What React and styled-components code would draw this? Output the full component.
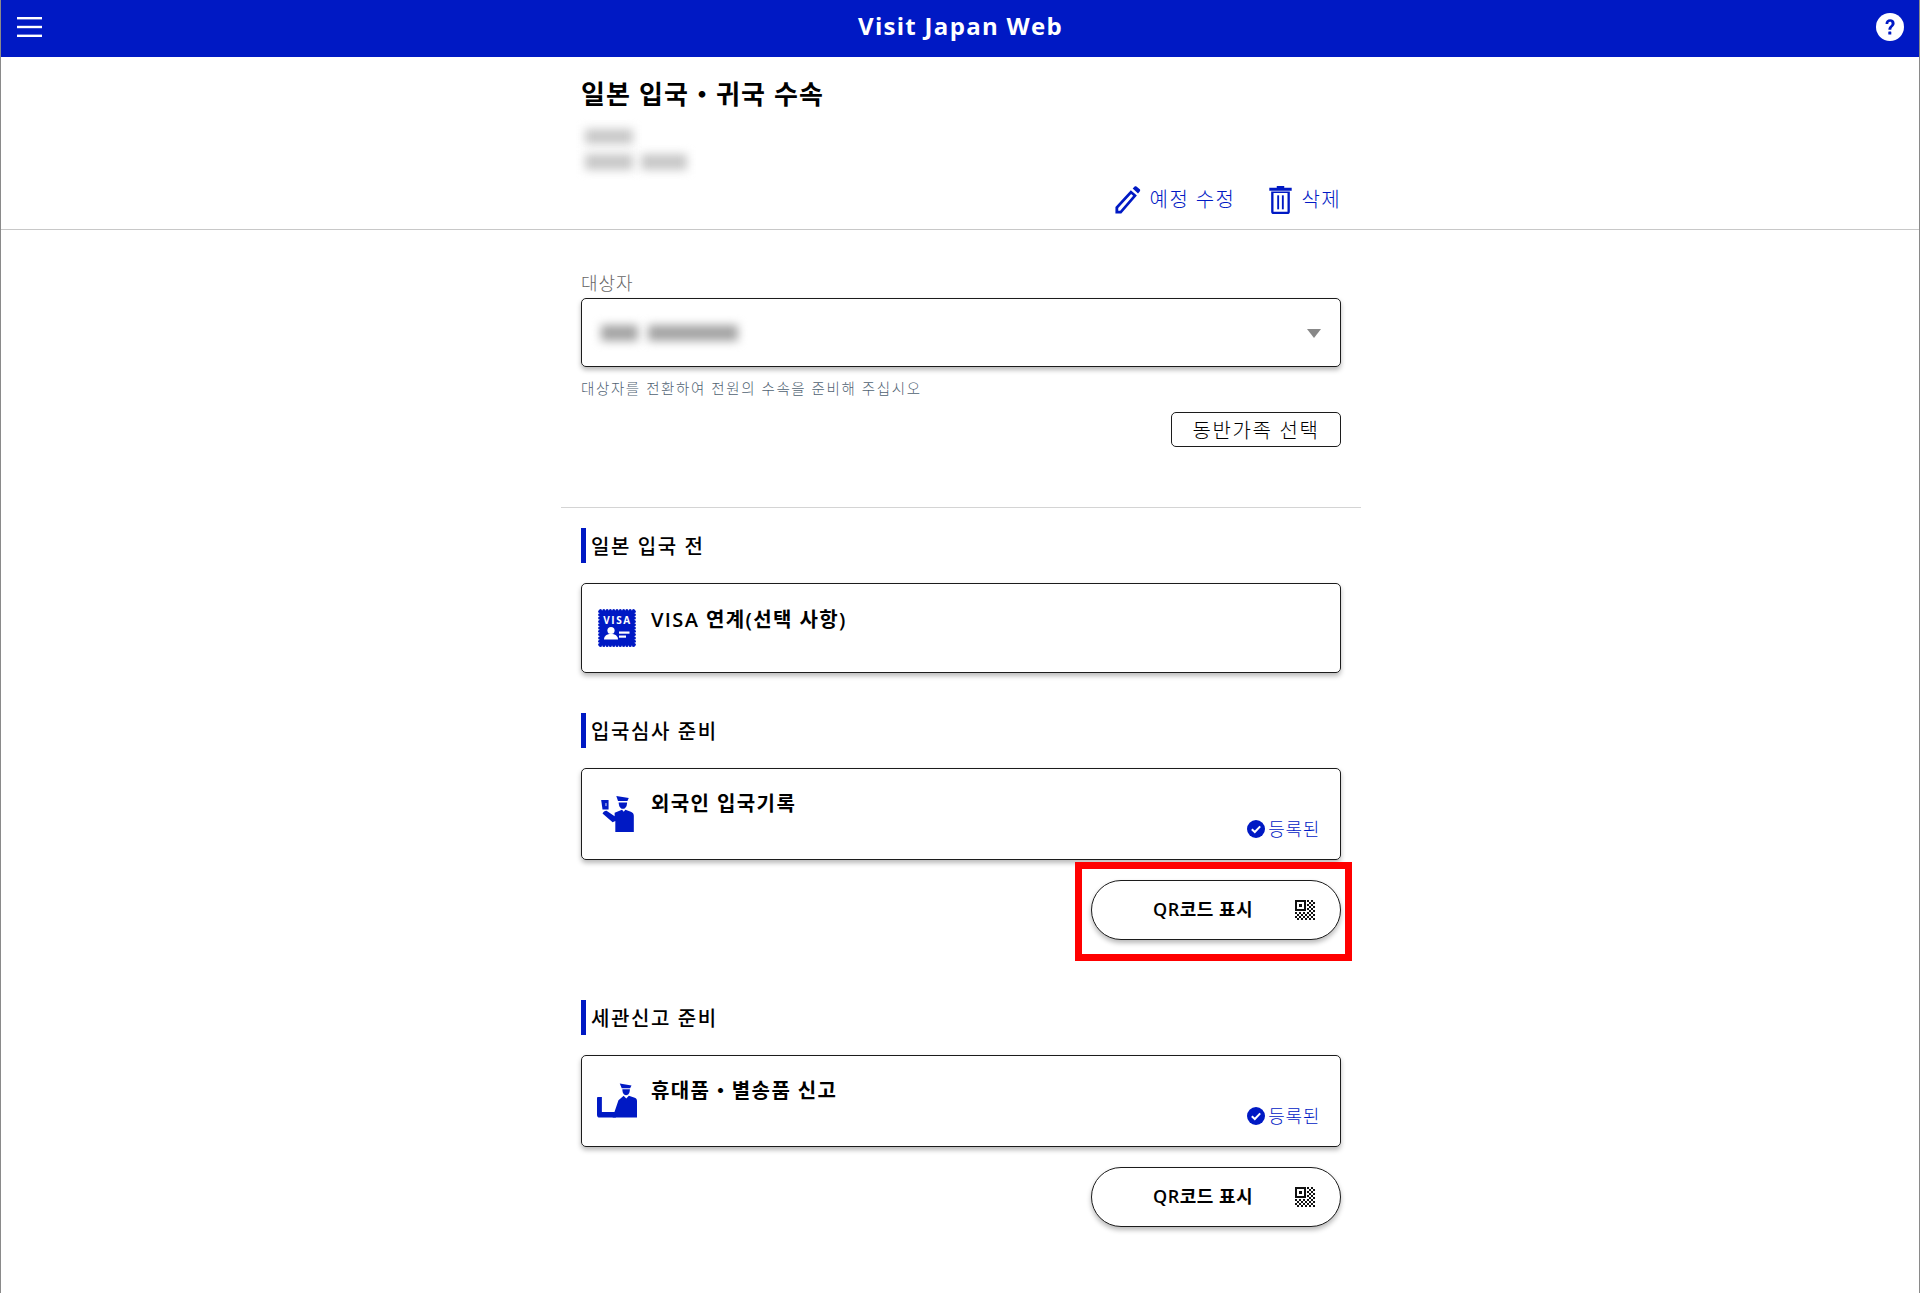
import React from 'react';
import styled, { createGlobalStyle } from 'styled-components';

const BLUE = '#0019c4';
const FONT = '"Open Sans", "Noto Sans CJK KR", sans-serif';

const GlobalStyle = createGlobalStyle`
  html, body { margin: 0; padding: 0; background: #fff; }
  body { font-family: ${FONT}; color: #000; }
  * { box-sizing: border-box; }
`;

const Page = styled.div`
  min-height: 1293px;
  border-left: 1px solid #8a8a8a;
  border-right: 1px solid #8a8a8a;
`;

const Header = styled.header`
  height: 57px;
  background: ${BLUE};
  display: flex;
  align-items: center;
  justify-content: space-between;
  padding: 0 15px 3px 16px;
`;

const BrandTitle = styled.div`
  color: #fff;
  font-size: 24px;
  font-weight: 700;
  letter-spacing: 1.3px;
  line-height: 50px;
  margin: 0 -3px 2px 0;
`;

const TopSection = styled.div`
  height: 173px;
  border-bottom: 1px solid #c8c8c8;
`;

const Column = styled.div`
  width: 760px;
  margin-left: 580px;
`;

const TripTitle = styled.h1`
  margin: 0;
  padding-top: 19px;
  font-size: 26px;
  font-weight: 700;
  line-height: 36px;
  letter-spacing: 1.1px;
`;

const BlurRow = styled.div`
  display: flex;
  gap: ${p => p.$gap || 14}px;
  margin-top: ${p => p.$top || 0}px;
  padding-left: ${p => p.$left || 0}px;
`;

const BlurBlock = styled.div`
  height: ${p => p.$h || 15}px;
  width: ${p => p.$w}px;
  background: ${p => p.$color || '#c8c8c8'};
  filter: blur(5px);
`;

const TripActions = styled.div`
  display: flex;
  justify-content: flex-end;
  align-items: center;
  gap: 33px;
  margin-top: 15px;
`;

const TripAction = styled.a`
  display: flex;
  align-items: center;
  gap: ${p => p.$gap}px;
  color: ${BLUE};
  font-size: 20px;
  font-weight: 300;
  line-height: 30px;
  letter-spacing: 1.4px;
`;

const TargetBlock = styled.div`
  padding-top: 38px;
`;

const FieldLabel = styled.div`
  font-size: 18px;
  font-weight: 300;
  line-height: 30px;
  letter-spacing: 1px;
  color: #666;
`;

const Select = styled.div`
  height: 69px;
  border: 1px solid #1c1c1c;
  border-radius: 5px;
  box-shadow: 0 3px 5px rgba(0, 0, 0, 0.28);
  display: flex;
  align-items: center;
  justify-content: space-between;
  padding: 0 19px 0 19px;
`;

const Caret = styled.span`
  width: 0;
  height: 0;
  margin-top: 1px;
  border-left: 7px solid transparent;
  border-right: 7px solid transparent;
  border-top: 9px solid #888;
`;

const HelperText = styled.div`
  margin-top: 10px;
  font-size: 14.5px;
  font-weight: 300;
  line-height: 24px;
  letter-spacing: 1.6px;
  color: #506272;
`;

const FamilyRow = styled.div`
  display: flex;
  justify-content: flex-end;
  margin-top: 11px;
`;

const FamilyButton = styled.button`
  width: 170px;
  height: 35px;
  background: #fff;
  border: 1px solid #1c1c1c;
  border-radius: 5px;
  padding: 0;
  font-family: ${FONT};
  font-size: 20px;
  font-weight: 300;
  letter-spacing: 1.6px;
  color: #000;
`;

const Divider = styled.hr`
  width: 800px;
  margin: 60px 0 0 560px;
  border: 0;
  border-top: 1px solid #d4d4d4;
`;

const Section = styled.section`
  margin-top: ${p => p.$top}px;
`;

const SectionHead = styled.h2`
  margin: 0;
  height: 35px;
  border-left: 5px solid ${BLUE};
  padding-left: 5px;
  font-size: 20px;
  font-weight: 500;
  line-height: 37px;
  letter-spacing: 1.6px;
`;

const Card = styled.div`
  position: relative;
  height: ${p => p.$h}px;
  margin-top: 20px;
  border: 1px solid #1c1c1c;
  border-radius: 5px;
  box-shadow: 0 3px 5px rgba(0, 0, 0, 0.28);
  display: flex;
  align-items: flex-start;
  padding: ${p => p.$iconTop}px 0 0 15px;
`;

const CardIcon = styled.div`
  width: 40px;
  height: 40px;
  flex: none;
  display: flex;
  justify-content: center;
`;

const CardTitle = styled.div`
  margin-left: 14px;
  margin-top: ${p => p.$top}px;
  font-size: 20px;
  font-weight: 600;
  line-height: 30px;
  letter-spacing: 1.4px;
`;

const Status = styled.div`
  position: absolute;
  right: 20px;
  bottom: 17px;
  display: flex;
  align-items: center;
  gap: 3px;
  color: ${BLUE};
  font-size: 18px;
  font-weight: 300;
  line-height: 26px;
  letter-spacing: 0.7px;
`;

const QrRow = styled.div`
  position: relative;
  display: flex;
  justify-content: flex-end;
  margin-top: 20px;
`;

const QrButton = styled.button`
  width: 250px;
  height: 60px;
  background: #fff;
  border: 1px solid #1c1c1c;
  border-radius: 30px;
  box-shadow: 0 3px 5px rgba(0, 0, 0, 0.28);
  padding: 0 0 0 61px;
  font-family: ${FONT};
  font-size: 18px;
  font-weight: 600;
  color: #000;
  display: flex;
  align-items: center;
`;

const QrLabel = styled.span`
  width: 142px;
  flex: none;
  text-align: left;
  line-height: 26px;
  margin-bottom: 2px;
  letter-spacing: 0.5px;
`;

const Highlight = styled.div`
  position: absolute;
  top: -18px;
  right: -11px;
  width: 277px;
  height: 99px;
  border: 7px solid #ff0000;
  pointer-events: none;
`;

const IconMenu = () => (
  <svg width="25" height="20" viewBox="0 0 25 20" fill="#fff">
    <rect y="0" width="25" height="2.4" />
    <rect y="8.8" width="25" height="2.4" />
    <rect y="17.6" width="25" height="2.4" />
  </svg>
);

const IconHelp = () => (
  <svg width="28" height="28" viewBox="0 0 28 28">
    <circle cx="14" cy="14" r="14" fill="#fff" />
    <path d="M9.5 11c0-3 2-4.700 4.600-4.700 2.700 0 4.500 1.600 4.500 4 0 3.500-3.300 3.500-3.300 6.400h-2.900c0-4 3.200-4 3.200-6.300 0-1-.6-1.700-1.600-1.700-1.100 0-1.700.9-1.700 2.300z" fill={BLUE} />
    <rect x="12.300" y="18.600" width="3" height="3" rx="0.4" fill={BLUE} />
  </svg>
);

const IconPencil = () => (
  <svg width="29" height="28" viewBox="0 0 30 30" fill={BLUE}>
    <path fillRule="evenodd" d="M1 29.500v-7L17.500 4.500l6.500 5.600L7.300 29.500zM4 23.700V26.500h2.100L20 10.500l-2.200-1.900z" />
    <path d="M19.500 2.600 21.600.6c.6-.5 1.300-.5 1.900 0l3.600 3c.6.500.6 1.300.1 1.900L25.200 8z" />
  </svg>
);

const IconTrash = () => (
  <svg width="25" height="28" viewBox="0 0 24 30" fill={BLUE}>
    <path d="M8 0h8v2h8v3H0V2h8z" />
    <path fillRule="evenodd" d="M2 6h20v21.500c0 1.400-1 2.500-2.500 2.500h-15C3 30 2 28.900 2 27.500zM4.500 7.500v20h15v-20z" />
    <rect x="8.500" y="10" width="2" height="15" />
    <rect x="13.500" y="10" width="2" height="15" />
  </svg>
);

// scalloped stamp edge: small discs spaced along the four sides
const SCALLOPS = [];
for (let i = 0; i <= 10; i++) {
  const p = 2.5 + i * 3.3;
  SCALLOPS.push([p, 1.6], [p, 36.4], [1.6, p], [36.4, p]);
}

const IconVisa = () => (
  <svg width="38" height="38" viewBox="0 0 38 38">
    {SCALLOPS.map(([cx, cy]) => (
      <circle key={`${cx}-${cy}`} cx={cx} cy={cy} r="1.5" fill={BLUE} />
    ))}
    <rect x="1.600" y="1.600" width="34.800" height="34.800" fill={BLUE} />
    <text x="19.500" y="14.500" textAnchor="middle" fontFamily="Open Sans, sans-serif" fontSize="10" fontWeight="700" letterSpacing="1.600" fill="#fff">VISA</text>
    <circle cx="13" cy="21.500" r="3.600" fill="#fff" />
    <path d="M6 30.500c0-3.700 3-5.500 7-5.500s7 1.800 7 5.500z" fill="#fff" />
    <rect x="21" y="22.500" width="10.500" height="2.200" fill="#fff" />
    <rect x="21" y="26.500" width="7" height="2.200" fill="#fff" />
  </svg>
);

const IconOfficer = () => (
  <svg width="33" height="36" viewBox="0 0 97 107" style={{ marginLeft: 1 }}>
    <g fill={BLUE}>
      <path d="M0 12h22v28H4z" />
      <path d="M45 0 82 6 78 15H50z" />
      <path d="M52 19h25c0 11-5 19-12.500 19S52 30 52 19z" />
      <path d="M4 52c2-5 8-9 12-8l24 16V50l22-9 5 6 5-6 16 6c6 2 9 6 9 12v48H42V74L34 78z" />
    </g>
    <rect x="13" y="21" width="2.500" height="9" fill="#fff" />
  </svg>
);

const IconCustoms = () => (
  <svg width="41" height="35" viewBox="0 0 123 105" fill={BLUE}>
    <path d="M70 0 106 6 102 15H76z" />
    <path d="M78 18h23c0 11-4 18-11.500 18S78 29 78 18z" />
    <path d="M48 105 66 52 82 38l8 8 8-8 18 6c5 2 7 5 7 10v51z" />
    <path d="M0 46c0-3 1-4 4-4h11v46h46l-3 17H9c-6 0-9-3-9-9z" />
  </svg>
);

const IconCheck = () => (
  <svg width="18" height="18" viewBox="0 0 18 18">
    <circle cx="9" cy="9" r="9" fill={BLUE} />
    <path d="M4.800 9.300 7.800 12 13.200 6.400" fill="none" stroke="#fff" strokeWidth="2" />
  </svg>
);

const QR_CELLS = [];
for (let y = 0; y < 10; y++) {
  for (let x = 0; x < 10; x++) {
    if ((x + y) % 2 === 0 && !(x < 6 && y < 6)) QR_CELLS.push([x * 2, y * 2]);
  }
}

const IconQr = () => (
  <svg width="20" height="20" viewBox="0 0 20 20" fill="#111" shapeRendering="crispEdges">
    <path fillRule="evenodd" d="M0 0h11v11H0zM2 2v7h7V2z" />
    <rect x="4" y="4" width="3" height="3" />
    {QR_CELLS.map(([x, y]) => (
      <rect key={`${x}-${y}`} x={x} y={y} width="2" height="2" />
    ))}
  </svg>
);

const QrAction = ({ highlight }) => (
  <QrRow>
    <QrButton>
      <QrLabel>QR코드 표시</QrLabel>
      <IconQr />
    </QrButton>
    {highlight && <Highlight />}
  </QrRow>
);

const App = () => (
  <Page>
    <GlobalStyle />
    <Header>
      <IconMenu />
      <BrandTitle>Visit Japan Web</BrandTitle>
      <IconHelp />
    </Header>

    <TopSection>
      <Column>
        <TripTitle>일본 입국・귀국 수속</TripTitle>
        <BlurRow $top={17} $left={4}>
          <BlurBlock $w={48} $h={15} />
        </BlurRow>
        <BlurRow $top={10} $left={4} $gap={8}>
          <BlurBlock $w={48} $h={16} />
          <BlurBlock $w={46} $h={16} />
        </BlurRow>
        <TripActions>
          <TripAction $gap={7}>
            <IconPencil />
            예정 수정
          </TripAction>
          <TripAction $gap={8}>
            <IconTrash />
            삭제
          </TripAction>
        </TripActions>
      </Column>
    </TopSection>

    <Column>
      <TargetBlock>
        <FieldLabel>대상자</FieldLabel>
        <Select>
          <BlurRow $gap={10}>
            <BlurBlock $w={37} $h={16} $color="#a4a4a4" />
            <BlurBlock $w={90} $h={16} $color="#a4a4a4" />
          </BlurRow>
          <Caret />
        </Select>
        <HelperText>대상자를 전환하여 전원의 수속을 준비해 주십시오</HelperText>
        <FamilyRow>
          <FamilyButton>동반가족 선택</FamilyButton>
        </FamilyRow>
      </TargetBlock>
    </Column>

    <Divider />

    <Column>
      <Section $top={20}>
        <SectionHead>일본 입국 전</SectionHead>
        <Card $h={90} $iconTop={25}>
          <CardIcon>
            <IconVisa />
          </CardIcon>
          <CardTitle $top={-4}>VISA 연계(선택 사항)</CardTitle>
        </Card>
      </Section>

      <Section $top={40}>
        <SectionHead>입국심사 준비</SectionHead>
        <Card $h={92} $iconTop={27}>
          <CardIcon>
            <IconOfficer />
          </CardIcon>
          <CardTitle $top={-7}>외국인 입국기록</CardTitle>
          <Status>
            <IconCheck />
            등록된
          </Status>
        </Card>
        <QrAction highlight />
      </Section>

      <Section $top={60}>
        <SectionHead>세관신고 준비</SectionHead>
        <Card $h={92} $iconTop={27}>
          <CardIcon>
            <IconCustoms />
          </CardIcon>
          <CardTitle $top={-7}>휴대품・별송품 신고</CardTitle>
          <Status>
            <IconCheck />
            등록된
          </Status>
        </Card>
        <QrAction />
      </Section>
    </Column>
  </Page>
);

export default App;
